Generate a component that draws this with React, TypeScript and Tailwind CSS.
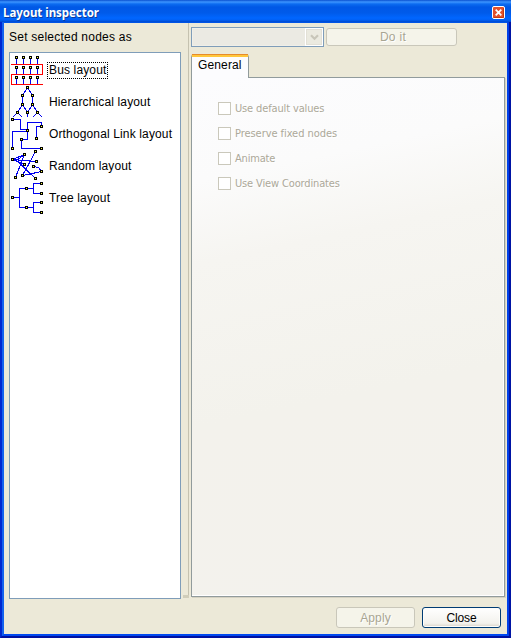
import React from "react";

type Pt = [number, number];

function Glyph({ lines, reds = [], nodes }: { lines: string[]; reds?: string[]; nodes: Pt[] }) {
  return (
    <svg width="34" height="32" viewBox="0 0 34 32" className="block shrink-0" shapeRendering="crispEdges" fill="none">
      {lines.map((d) => <path key={d} d={d} stroke="#0000f0" strokeWidth="1.1" />)}
      {reds.map((d) => <path key={d} d={d} stroke="#ff0000" />)}
      {nodes.map(([x, y]) => (
        <g key={`${x}-${y}`}>
          <rect x={x - 1} y={y - 1} width="3" height="3" fill="#000" />
          <rect x={x} y={y} width="1" height="1" fill="#ffff40" />
        </g>
      ))}
    </svg>
  );
}

const busX = [6, 13, 20, 27];

const items = [
  {
    name: "Bus layout",
    lines: busX.flatMap((x) => [3, 13, 23].map((y) => `M${x + 0.5} ${y}v7`)),
    reds: ["M1 10.5H32.5V20.5H1.5V30.5H33"],
    nodes: busX.flatMap((x) => [3, 13, 23].map((y): Pt => [x, y])),
  },
  {
    name: "Hierarchical layout",
    lines: [
      "M17.5 1.5L12.5 9.5V18.5L7.5 26.5L2.5 31.5",
      "M17.5 1.5L22.5 9.5V18.5L27.5 26.5L32.5 31.5",
      "M12.5 18.5L17.5 26.5V31",
      "M22.5 18.5L17.5 26.5",
      "M7.5 26.5L12.5 31.5",
      "M27.5 26.5L22.5 31.5",
    ],
    nodes: [[17, 1], [12, 9], [22, 9], [12, 18], [22, 18], [7, 26], [17, 26], [27, 26]] as Pt[],
  },
  {
    name: "Orthogonal Link layout",
    lines: [
      "M2.5 1.5H10.5V11.5H17.5",
      "M17.5 13.5H2.5V30.5",
      "M17.5 12.5V4.5H31.5V8.5H26.5V20.5",
      "M17.5 12.5V21.5H11.5V30.5H31.5",
    ],
    nodes: [[2, 1], [17, 12], [31, 8], [26, 20], [11, 21], [2, 30], [31, 30]] as Pt[],
  },
  {
    name: "Random layout",
    lines: [
      "M2.5 9.5L14.5 4.5L5.5 27.5",
      "M2.5 9.5L26.5 11.5",
      "M2.5 9.5L14.5 14.5",
      "M14.5 4.5L6.5 10.5L25.5 28.5",
      "M25.5 1.5L12.5 25.5L31.5 21.5L28.5 17.5L23.5 16.5",
      "M12.5 25.5L31.5 21.5",
    ],
    nodes: [[2, 9], [14, 4], [25, 1], [26, 11], [14, 14], [23, 16], [31, 21], [12, 25], [5, 27], [25, 28]] as Pt[],
  },
  {
    name: "Tree layout",
    lines: ["M2.5 15.5H9.5M16.5 6.5H9.5V25.5H16.5", "M16.5 6.5H23.5M31.5 1.5H23.5V11.5H31.5", "M16.5 25.5H23.5M31.5 20.5H23.5V30.5H31.5"],
    nodes: [[2, 15], [16, 6], [16, 25], [31, 1], [31, 11], [31, 20], [31, 30]] as Pt[],
  },
];

const options = [
  { label: "Use default values", tracking: "tracking-[-0.14px]" },
  { label: "Preserve fixed nodes", tracking: "tracking-[-0.06px]" },
  { label: "Animate", tracking: "tracking-[-0.2px]" },
  { label: "Use View Coordinates", tracking: "tracking-[-0.14px]" },
];

function TitleBar() {
  return (
    <header className="flex h-[22px] shrink-0 items-center justify-between bg-[linear-gradient(to_bottom,#0a50d0_0px,#3d95ff_2px,#0c6cf0_4px,#0058e6_7px,#005bea_13px,#0066ff_18px,#0060f5_20px,#0048cc_22px)] pl-[3px] pr-[6px]">
      <h1 className="pt-[4px] font-['Noto_Sans',sans-serif] text-[11.5px] leading-[18px] font-bold tracking-[-0.04px] whitespace-nowrap text-white [text-shadow:1px_1px_#0a3a9c]">Layout inspector</h1>
      <svg width="13" height="13" viewBox="0 0 13 13" className="mt-[3px]">
        <rect x="0.5" y="0.5" width="12" height="12" rx="1.5" fill="#e2512c" stroke="#fff" />
        <path d="M1.5 11.5H11.5V2" stroke="#c23a12" fill="none" />
        <path d="M3.7 3.7L9.3 9.3M9.3 3.7L3.7 9.3" stroke="#fff" strokeWidth="1.8" />
      </svg>
    </header>
  );
}

export default function App() {
  return (
    <div className="flex h-[638px] w-[511px] flex-col overflow-hidden bg-[#0010a0] font-['Liberation_Sans',Arial,sans-serif] text-[12px] tracking-[0.14px] text-black">
      <TitleBar />
      <div className="flex min-h-0 flex-1 border-r-2 border-b-2 border-l-2 border-r-[#0014a4] border-b-[#0010a0] border-l-[#0028d0]">
        <div className="flex w-full flex-col border-r-2 border-b-2 border-l-2 border-r-[#0040e8] border-b-[#0048f0] border-l-[#1462ee] bg-[#ece9d8]">
          <div className="flex h-[577px] border-t border-[#0054e6]">
            <section className="flex w-[177px] flex-col pl-[5px]">
              <div className="h-[29px] pt-[6px] leading-[16px] tracking-[0.23px] whitespace-nowrap">Set selected nodes as</div>
              <ul className="h-[547px] w-[172px] border border-[#7f9db9] bg-white pt-[1px]">
                {items.map((item, i) => (
                  <li key={item.name} className="flex h-8 items-center">
                    <Glyph lines={item.lines} reds={item.reds} nodes={item.nodes} />
                    <span className={`ml-[3px] border border-dotted px-[1px] leading-[15px] whitespace-nowrap ${i === 0 ? "border-black" : "border-transparent"}`}>{item.name}</span>
                  </li>
                ))}
              </ul>
            </section>
            <div className="flex w-[10px] flex-col items-start pl-[2px]">
              <div className="ml-[5px] h-[572px] w-px bg-[#c5c2b0]" />
              <div className="h-[3px] w-[6px] bg-[#d0cdba]" />
            </div>
            <section className="flex w-[314px] flex-col pt-[4px]">
              <div className="flex items-center gap-[2px]">
                <div className="flex h-5 w-[133px] justify-end border border-[#7f9db9] bg-[#ebeae3] shadow-[inset_0_0_0_1px_#f0efe8]">
                  <div className="flex h-[18px] w-[18px] items-center justify-center border border-white bg-[#ebeae0] shadow-[inset_0_0_0_1px_#e2e0d6]">
                    <svg width="9" height="7" viewBox="0 0 9 7"><path d="M1 1.2L4.5 4.7L8 1.2" fill="none" stroke="#c8c6b9" strokeWidth="2.2" /></svg>
                  </div>
                </div>
                <button className="h-[18px] w-[131px] rounded-[3px] border border-[#c9c7ba] bg-[#f5f4ea] pt-px pl-[3px] leading-[15px] tracking-[0.3px] text-[#a8a592] [text-shadow:1px_1px_#fff]">Do it</button>
              </div>
              <div className="relative z-10 mt-[7px] h-[24px] w-[58px] rounded-t-[3px] border-t-3 border-r border-l border-t-[#ffc73c] border-r-[#919b9c] border-l-[#919b9c] bg-[#fcfcfe] pl-[6px] leading-[17px]">
                <div className="absolute -top-[3px] right-0 left-0 h-px bg-[#e68b2c]" />
                General
              </div>
              <div className="-mt-px h-[520px] border border-[#919b9c] bg-[linear-gradient(168deg,#fcfcfe_0%,#fbfbfb_18%,#f6f5f1_32%,#f3f2ec_60%,#f3f2ed_100%)] pt-[18px] pl-[26px] shadow-[1px_1px_#d5d2c2,inset_-1px_-1px_#fff]">
                {options.map((o) => (
                  <label key={o.label} className="flex h-[25px] items-center gap-[4px]">
                    <span className="h-[13px] w-[13px] border border-[#cac8bb] bg-white" />
                    <span className={`font-['DejaVu_Sans_Condensed','DejaVu_Sans',sans-serif] text-[11px] leading-[14px] whitespace-nowrap text-[#aca899] [text-shadow:1px_1px_#fff] ${o.tracking}`}>{o.label}</span>
                  </label>
                ))}
              </div>
            </section>
          </div>
          <footer className="flex justify-end gap-[7px] pt-[8px] pr-[6px]">
            <button className="h-[21px] w-[79px] rounded-[3px] border border-[#c9c7ba] bg-[#f5f4ea] text-[#a8a592] [text-shadow:1px_1px_#fff]">Apply</button>
            <button className="h-[21px] w-[79px] rounded-[3px] border border-[#003c74] bg-[linear-gradient(#ffffff,#f3f2ed_80%,#d9d3c8)] tracking-[-0.1px] shadow-[inset_0_0_0_1px_#fdfdfa]">Close</button>
          </footer>
        </div>
      </div>
    </div>
  );
}
